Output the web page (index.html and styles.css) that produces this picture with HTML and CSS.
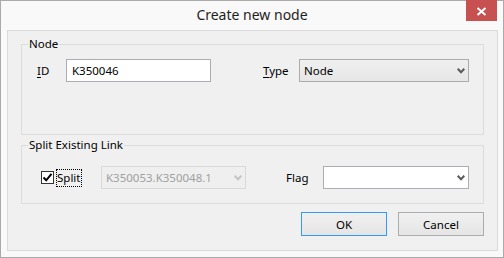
FILE: index.html
```html
<!DOCTYPE html>
<html>
<head>
<meta charset="utf-8">
<title>Create new node</title>
<link rel="stylesheet" href="styles.css">
</head>
<body>
<div class="window">
  <div class="titlebar">
    <div class="title">Create new node</div>
    <div class="close">
      <svg width="31" height="21" viewBox="0 0 31 21"><path d="M11.5 8 L19.5 15 M19.5 8 L11.5 15" stroke="#fff" stroke-width="2" fill="none"/></svg>
    </div>
  </div>
  <div class="client">
    <div class="group group-node">
      <div class="legend">Node</div>
      <div class="row row-node">
        <label class="lbl"><u>I</u>D</label>
        <div class="textbox">K350046</div>
        <span></span>
        <label class="lbl"><u>T</u>ype</label>
        <div class="combo combo-std"><span class="combo-text">Node</span><svg class="chev" width="8" height="6" viewBox="0 0 8 6"><path d="M0.7 0.8 L4 4.2 L7.3 0.8" stroke="#5a5a5a" stroke-width="2" fill="none"/></svg></div>
      </div>
    </div>
    <div class="group group-split">
      <div class="legend">Split Existing Link</div>
      <div class="row row-split">
        <div class="checkwrap">
          <span class="checkbox"><svg width="11" height="11" viewBox="0 0 11 11"><path d="M1.5 5.5 L4.2 8.3 L9.5 1.8" stroke="#000" stroke-width="2" fill="none"/></svg></span>
          <span class="focus">Split</span>
        </div>
        <div class="combo combo-disabled"><span class="combo-text">K350053.K350048.1</span><svg class="chev" width="8" height="6" viewBox="0 0 8 6"><path d="M0.7 0.8 L4 4.2 L7.3 0.8" stroke="#c4c4c4" stroke-width="2" fill="none"/></svg></div>
        <span></span>
        <label class="lbl">Flag</label>
        <div class="combo combo-white"><span class="combo-text"></span><svg class="chev" width="8" height="6" viewBox="0 0 8 6"><path d="M0.7 0.8 L4 4.2 L7.3 0.8" stroke="#5a5a5a" stroke-width="2" fill="none"/></svg></div>
      </div>
    </div>
    <div class="buttons">
      <button class="btn btn-default">OK</button>
      <button class="btn">Cancel</button>
    </div>
  </div>
</div>
</body>
</html>
```

FILE: styles.css
```css
* { box-sizing: border-box; }
html, body { margin: 0; padding: 0; }
body {
  width: 504px;
  height: 258px;
  overflow: hidden;
  background: #fff;
  color: #000;
  font-family: "Noto Sans", "Open Sans", sans-serif;
  font-size: 11.5px;
}
.window {
  width: 504px;
  height: 258px;
  border: 1px solid #aaaaaa;
  background: #f9f9f9;
  display: flex;
  flex-direction: column;
}
.titlebar {
  height: 29px;
  flex: none;
  display: grid;
  grid-template-columns: 1fr auto 1fr;
  align-items: start;
}
.title {
  grid-column: 2;
  font-size: 14px;
  line-height: 19px;
  padding-top: 4px;
  color: #1e1e1e;
}
.close {
  grid-column: 3;
  justify-self: end;
  width: 31px;
  height: 21px;
  margin-top: -1px;
  margin-right: 6px;
  background: #c75050;
  display: flex;
}
.client {
  flex: 1;
  margin: 0 5px 6px 6px;
  border: 1px solid #dadada;
  background: #f0f0f0;
  padding: 13px 13px 0;
  display: flex;
  flex-direction: column;
}
.group {
  border: 1px solid #dcdcdc;
}
.legend {
  width: max-content;
  margin: -9px 0 0 6px;
  padding: 0 1px;
  line-height: 16px;
  background: #f0f0f0;
}
.group-node { padding-bottom: 52px; }
.group-split { margin-top: 10px; padding-bottom: 14px; }
.row {
  display: grid;
  height: 23px;
  align-items: center;
}
.row-node { margin: 7px 14px 0 15px; grid-template-columns: 29px 145px 1fr 36px 170px; }
.row-split { margin: 13px 14px 0 19px; grid-template-columns: 60px 145px 1fr 37px 146px; }
.lbl { line-height: 16px; white-space: nowrap; }
.lbl u { text-underline-offset: 2px; }
.textbox {
  height: 23px;
  border: 1px solid #abadb3;
  background: #fff;
  padding: 0 5px;
  line-height: 21px;
}
.combo {
  height: 23px;
  display: flex;
  align-items: center;
  padding: 0 3px 0 4px;
  border: 1px solid #acacac;
}
.combo-text { flex: 1; line-height: 21px; white-space: nowrap; overflow: hidden; }
.chev { flex: none; }
.combo-std { background: linear-gradient(#f0f0f0, #e6e6e6); }
.combo-white { background: #fff; border-color: #abadb3; }
.combo-disabled { background: #efefef; border-color: #d9d9d9; color: #a0a0a0; }
.checkwrap { display: flex; align-items: center; }
.checkbox {
  width: 13px;
  height: 13px;
  border: 1px solid #333;
  background: #fff;
  display: flex;
}
.focus {
  margin-left: 2px;
  border: 1px dotted #000;
  padding: 0 1px 0 0;
  line-height: 16px;
}
.buttons {
  display: flex;
  justify-content: flex-end;
  gap: 11px;
  margin-top: 8px;
}
.btn {
  width: 86px;
  height: 24px;
  margin: 0;
  padding: 0;
  border: 1px solid #acacac;
  background: linear-gradient(#f0f0f0, #e5e5e5);
  font: inherit;
  color: #000;
}
.btn-default { border-color: #3399ff; }
```
